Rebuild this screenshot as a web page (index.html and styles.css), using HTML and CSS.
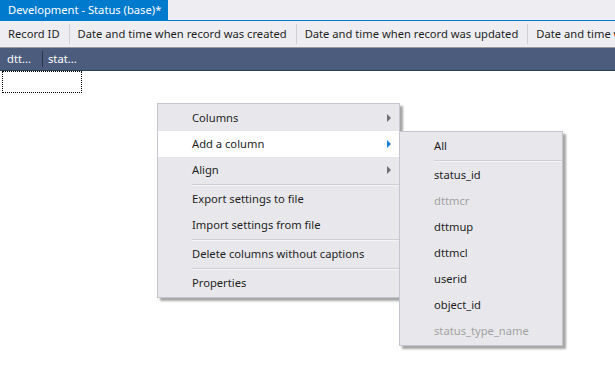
FILE: index.html
```html
<!DOCTYPE html>
<html lang="en">
<head>
    <meta charset="UTF-8">
    <meta name="viewport" content="width=device-width, initial-scale=1.0">
    <title>Development - Status (base)*</title>
    <link rel="stylesheet" href="styles.css">
</head>
<body>
    <div class="tabstrip">
        <div class="tab">Development - Status (base)*</div>
    </div>

    <div class="chooser">
        <div class="chooser-item">Record ID</div>
        <div class="chooser-item">Date and time when record was created</div>
        <div class="chooser-item">Date and time when record was updated</div>
        <div class="chooser-item">Date and time w</div>
    </div>

    <div class="grid-header">
        <div class="col col-first">dtt...</div>
        <div class="col">stat...</div>
    </div>

    <div class="grid-body">
        <div class="cell-focus"></div>
    </div>

    <div class="menu main-menu">
        <div class="menu-item has-sub">Columns</div>
        <div class="menu-item has-sub active">Add a column</div>
        <div class="menu-item has-sub">Align</div>
        <div class="menu-sep"></div>
        <div class="menu-item">Export settings to file</div>
        <div class="menu-item">Import settings from file</div>
        <div class="menu-sep"></div>
        <div class="menu-item">Delete columns without captions</div>
        <div class="menu-sep"></div>
        <div class="menu-item">Properties</div>
    </div>

    <div class="menu sub-menu">
        <div class="menu-item">All</div>
        <div class="menu-sep"></div>
        <div class="menu-item">status_id</div>
        <div class="menu-item disabled">dttmcr</div>
        <div class="menu-item">dttmup</div>
        <div class="menu-item">dttmcl</div>
        <div class="menu-item">userid</div>
        <div class="menu-item">object_id</div>
        <div class="menu-item disabled">status_type_name</div>
    </div>
</body>
</html>
```

FILE: styles.css
```css
html, body {
    margin: 0;
    padding: 0;
    height: 100%;
    overflow: hidden;
}
body {
    font-family: "Noto Sans", "Open Sans", sans-serif;
    font-size: 11.2px;
    color: #1e1e1e;
    background: #ffffff;
    position: relative;
}

/* document tab */
.tabstrip {
    height: 20px;
    background: #eeeef2;
    border-bottom: 1px solid #007acc;
    display: flex;
}
.tab {
    background: #007acc;
    color: #ffffff;
    padding: 0 7px 0 8px;
    line-height: 20px;
    white-space: nowrap;
}

/* column chooser bar */
.chooser {
    height: 26px;
    background: #eeeef2;
    border-bottom: 1px solid #9a9a9a;
    display: flex;
    align-items: center;
    white-space: nowrap;
    overflow: hidden;
}
.chooser-item {
    padding: 0 9px 0 8px;
    border-right: 1px solid #d0d0d4;
    line-height: 20px;
    flex-shrink: 0;
}
.chooser-item:last-child {
    border-right: none;
}

/* grid */
.grid-header {
    height: 22px;
    background: #4b5c7d;
    border-bottom: 1px solid #2f3b52;
    color: #ffffff;
    display: flex;
    align-items: center;
}
.col {
    padding: 0 0 0 5px;
    line-height: 16px;
}
.col-first {
    width: 35px;
    padding-left: 7px;
    border-right: 1px solid #2b3548;
}
.grid-body {
    padding: 0 0 0 2px;
}
.cell-focus {
    width: 78px;
    height: 20px;
    border: 1px dotted #000000;
}

/* context menus */
.menu {
    position: absolute;
    background: #e8e8ec;
    border: 1px solid #c4c6cf;
    padding: 1px 0;
    box-shadow: 3px 3px 2px rgba(0, 0, 0, 0.35);
}
.main-menu {
    left: 157px;
    top: 103px;
    width: 241px;
}
.sub-menu {
    left: 399px;
    top: 131px;
    width: 162px;
}
.menu-item {
    height: 26px;
    line-height: 26px;
    padding-left: 34px;
    white-space: nowrap;
    position: relative;
    color: #1e1e1e;
}
.menu-item.active {
    background: #ffffff;
}
.menu-item.disabled {
    color: #a2a2a2;
}
.has-sub::after {
    content: "";
    position: absolute;
    right: 8px;
    top: 9px;
    border-left: 4px solid #707070;
    border-top: 4px solid transparent;
    border-bottom: 4px solid transparent;
}
.has-sub.active::after {
    border-left-color: #1c7bd6;
}
.menu-sep {
    height: 1px;
    margin: 1px 0 0 34px;
    background: #cfd0d6;
    border-bottom: 1px solid #f5f5f7;
}
```
